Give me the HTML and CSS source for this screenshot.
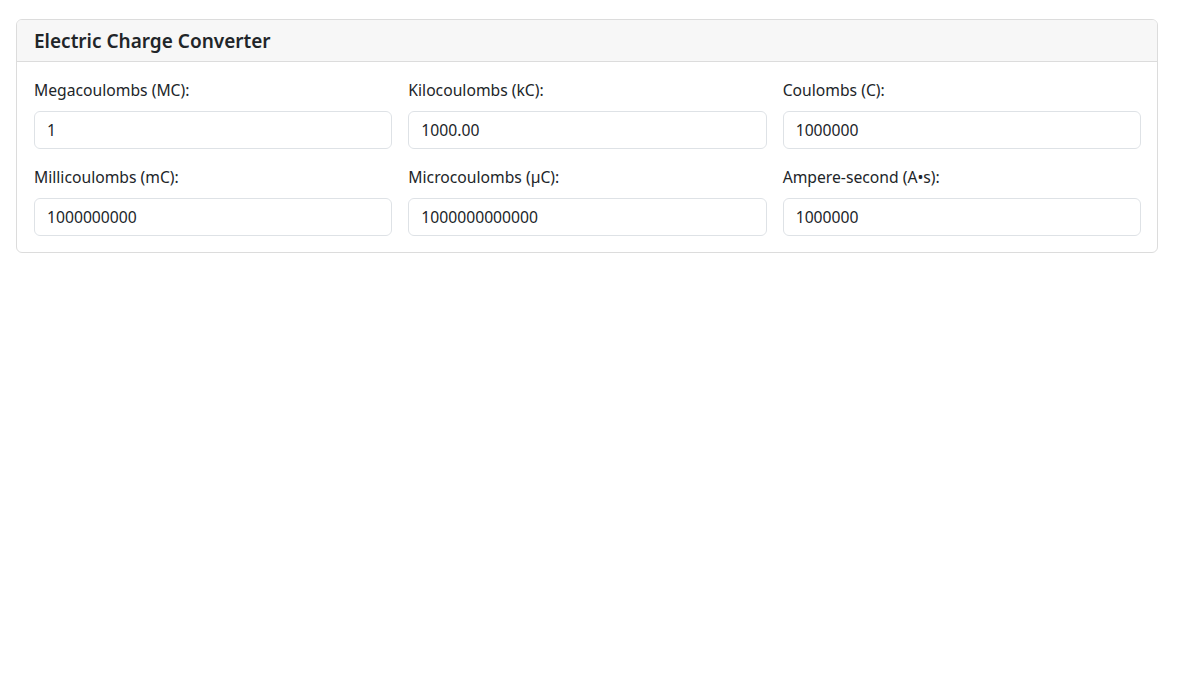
FILE: index.html
```html
<!DOCTYPE html>
<html lang="en">
<head>
<meta charset="utf-8">
<title>Electric Charge Converter</title>
<link rel="stylesheet" href="styles.css">
</head>
<body>
<div class="page">
  <div class="card">
    <div class="card-header">
      <h1 class="card-title">Electric Charge Converter</h1>
    </div>
    <div class="card-body">
      <div class="grid">
        <div class="field">
          <label for="mc">Megacoulombs (MC):</label>
          <input id="mc" type="text" value="1">
        </div>
        <div class="field">
          <label for="kc">Kilocoulombs (kC):</label>
          <input id="kc" type="text" value="1000.00">
        </div>
        <div class="field">
          <label for="c">Coulombs (C):</label>
          <input id="c" type="text" value="1000000">
        </div>
        <div class="field">
          <label for="mlc">Millicoulombs (mC):</label>
          <input id="mlc" type="text" value="1000000000">
        </div>
        <div class="field">
          <label for="uc">Microcoulombs (µC):</label>
          <input id="uc" type="text" value="1000000000000">
        </div>
        <div class="field">
          <label for="as">Ampere-second (A•s):</label>
          <input id="as" type="text" value="1000000">
        </div>
      </div>
    </div>
  </div>
</div>
</body>
</html>
```

FILE: styles.css
```css
* {
  box-sizing: border-box;
}

html, body {
  margin: 0;
  background: #fff;
}

body {
  font-family: "Noto Sans", "Open Sans", "Liberation Sans", sans-serif;
  font-size: 15.7px;
  line-height: 24px;
  color: #212529;
}

.page {
  padding: 19px 22px 0 16px;
}

.card {
  border: 1px solid #dcdcdc;
  border-radius: 6px;
  background: #fff;
  overflow: hidden;
}

.card-header {
  background: #f7f7f7;
  border-bottom: 1px solid #dcdcdc;
  padding: 9px 17px 8px;
}

.card-title {
  margin: 0;
  font-size: 19px;
  line-height: 24px;
  font-weight: 600;
  color: #212529;
}

.card-body {
  padding: 16px 16px 16px 17px;
}

.grid {
  display: grid;
  grid-template-columns: repeat(3, 1fr);
  column-gap: 16px;
  row-gap: 16px;
}

.field {
  display: flex;
  flex-direction: column;
}

.field label {
  display: block;
  margin-bottom: 9px;
  color: #212529;
}

.field input {
  height: 38px;
  width: 100%;
  padding: 0 12px;
  font: inherit;
  color: #212529;
  border: 1px solid #dee2e6;
  border-radius: 6px;
  background: #fff;
  outline: none;
}
```
